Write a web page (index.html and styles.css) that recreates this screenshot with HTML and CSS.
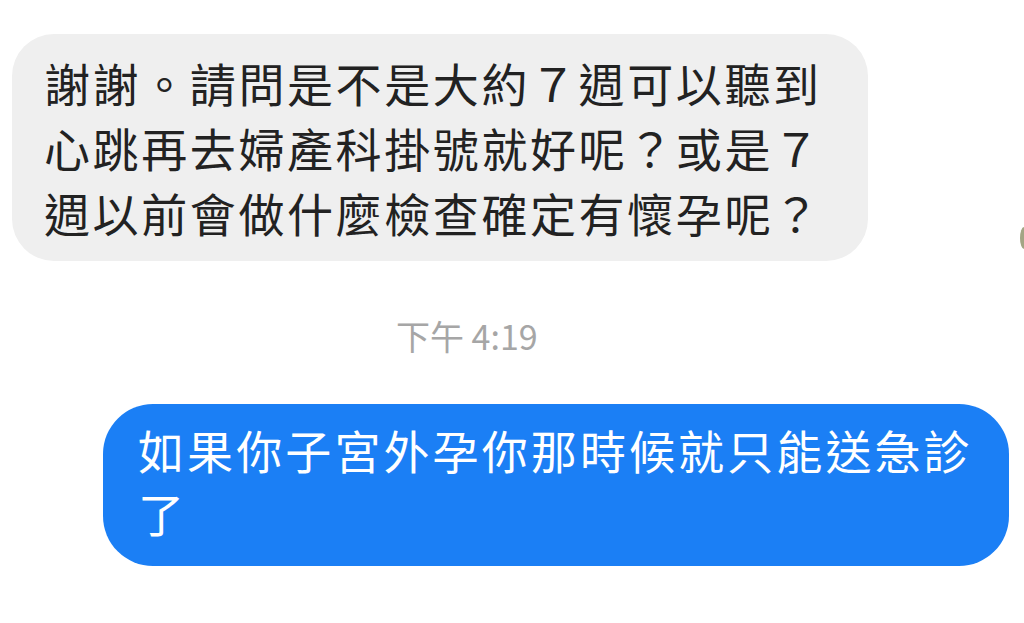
FILE: index.html
```html
<!DOCTYPE html>
<html lang="zh-Hant">
<head>
    <meta charset="UTF-8">
    <meta name="viewport" content="width=device-width, initial-scale=1.0">
    <title>訊息</title>
    <link rel="stylesheet" href="styles.css">
</head>
<body>
    <div class="chat">
        <!-- 收到的訊息 -->
        <div class="bubble bubble-in">謝謝。請問是不是大約７週可以聽到心跳再去婦產科掛號就好呢？或是７週以前會做什麼檢查確定有懷孕呢？</div>
        <div class="avatar-edge"></div>

        <div class="time">下午 4:19</div>

        <!-- 送出的訊息 -->
        <div class="bubble bubble-out">如果你子宮外孕你那時候就只能送急診了</div>
    </div>
</body>
</html>
```

FILE: styles.css
```css
body {
    margin: 0;
    padding: 0;
    background-color: #fff;
    font-family: "Noto Sans CJK TC", "Noto Sans", sans-serif;
    overflow: hidden;
}
.chat {
    position: relative;
    padding-top: 34px;
    display: flex;
    flex-direction: column;
    align-items: flex-start;
}
.bubble {
    box-sizing: border-box;
    font-size: 46px;
    word-break: break-all;
}
.bubble-in {
    margin-left: 12px;
    width: 856px;
    padding: 16px 20px 16px 32px;
    line-height: 65px;
    letter-spacing: 2.6px;
    background-color: #efefef;
    color: #222;
    border-radius: 42px;
}
.avatar-edge {
    position: absolute;
    left: 1020px;
    top: 227px;
    width: 8px;
    height: 22px;
    border-radius: 50%;
    background-color: #a3a585;
}
.time {
    margin-top: 55px;
    padding-left: 396px;
    font-size: 34px;
    line-height: 40px;
    color: #a6a6a6;
}
.bubble-out {
    margin-top: 48px;
    margin-left: 103px;
    width: 906px;
    padding: 14px 20px 22px 35px;
    line-height: 63px;
    letter-spacing: 3.1px;
    background-color: #1b7ff5;
    color: #fff;
    border-radius: 50px;
}
```
